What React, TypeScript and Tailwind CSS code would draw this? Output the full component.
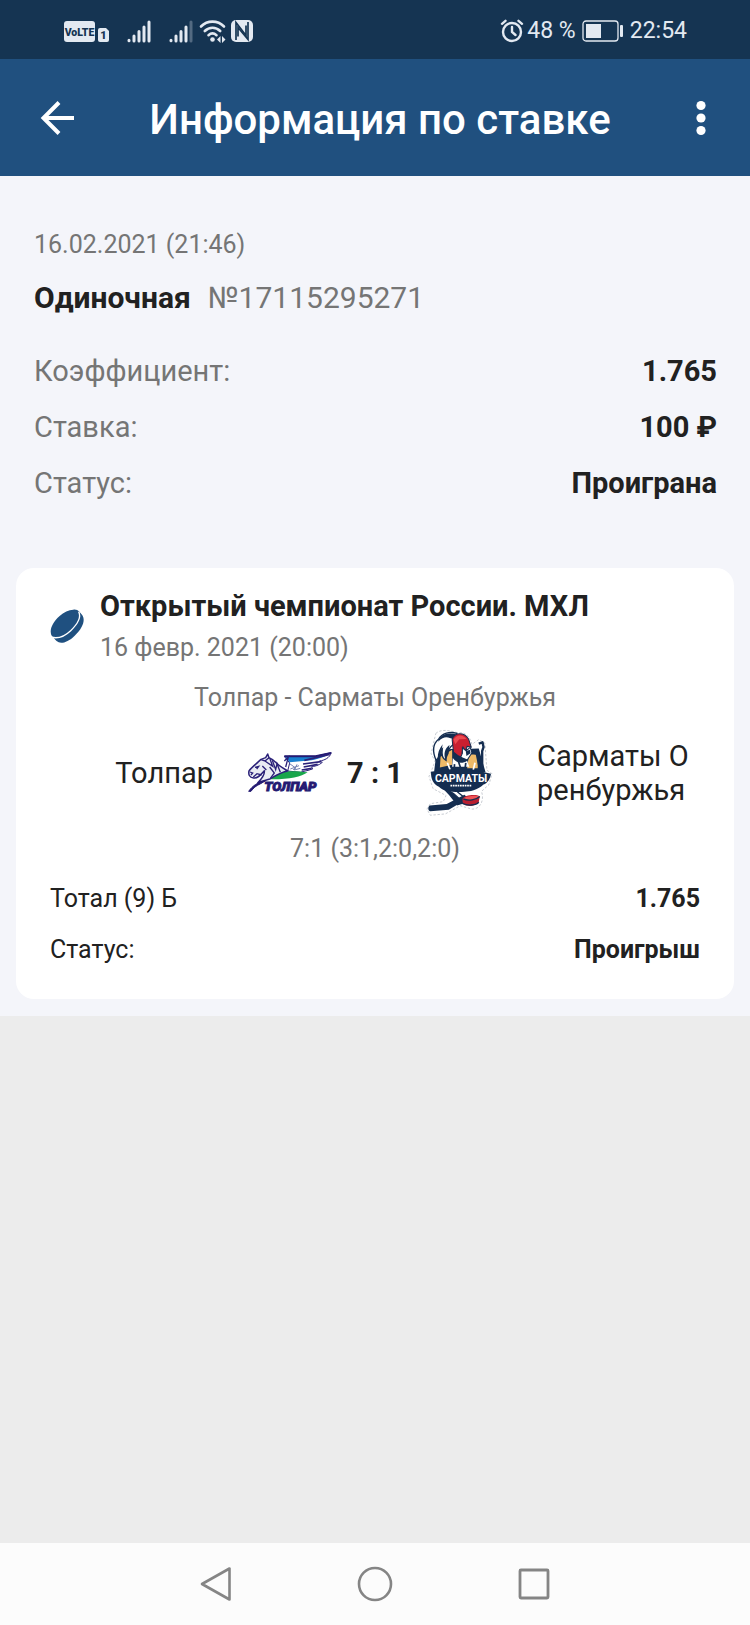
import type { ReactNode } from "react";

function SignalIcon({ weak = false }: { weak?: boolean }) {
  return (
    <svg className="h-6 w-6" viewBox="0 0 24 24" fill="none" stroke="#e3e9f1" strokeWidth="3" strokeLinecap="round" aria-hidden="true">
      <path d="M2 21.2v.6M7 17v5M12 12.5V22M17 8v14" />
      <path d="M22 3v19" opacity={weak ? 0.3 : 1} />
    </svg>
  );
}

function StatusBar() {
  return (
    <div className="flex h-[59px] shrink-0 items-center justify-between bg-[#153452] pt-0.5 pr-[63px] pl-16 text-[23px] leading-8 text-[#e3e9f1]">
      <div className="flex items-center">
        <svg className="h-6 w-[45px]" viewBox="0 0 45 24" aria-hidden="true">
          <rect x="0" y="2" width="31" height="21" rx="3" fill="#e3e9f1" />
          <text x="15.5" y="16.500" textAnchor="middle" fontFamily="Roboto, sans-serif" fontSize="10.500" fontWeight="900" fill="#153452">VoLTE</text>
          <path d="M36 9h6l3 3v9a2 2 0 0 1-2 2h-7a2 2 0 0 1-2-2V11a2 2 0 0 1 2-2z" fill="#e3e9f1" />
          <text x="39.5" y="20" textAnchor="middle" fontFamily="Roboto, sans-serif" fontSize="11" fontWeight="900" fill="#153452">1</text>
        </svg>
        <div className="ml-[18px] flex gap-[18px]">
          <SignalIcon />
          <SignalIcon weak />
        </div>
        <svg className="ml-1.5 h-6 w-[27px]" viewBox="0 0 27 24" fill="none" stroke="#e3e9f1" strokeWidth="2.6" strokeLinecap="round" aria-hidden="true">
          <path d="M2 7.5C8.500 1 18.500 1 25 7.500M5.800 12c4.500-4.400 11-4.400 15.400 0M9.500 16.200c2.500-2.200 5.500-2.200 8 0" />
          <circle cx="13.500" cy="20.500" r="2.300" fill="#e3e9f1" stroke="none" />
          <path d="M21.500 17v7l-3.500-3.500zM23 17v7l3.500-3.500z" fill="#e3e9f1" stroke="none" />
        </svg>
        <svg className="ml-1 h-6 w-6" viewBox="0 0 24 24" aria-hidden="true">
          <rect x="1" y="1" width="22" height="22" rx="5" fill="#e3e9f1" />
          <path d="M6 21V3.500L16 16.500V6.500" fill="none" stroke="#153452" strokeWidth="1.700" />
          <path d="M8 17.500V8.500L18 20.500V3" fill="none" stroke="#153452" strokeWidth="1.700" />
        </svg>
      </div>
      <div className="flex items-center">
        <svg className="h-6 w-6" viewBox="0 0 24 24" fill="none" stroke="#e3e9f1" strokeWidth="2.400" strokeLinecap="round" aria-hidden="true">
          <circle cx="12" cy="13" r="9" />
          <path d="M12 8v5l3.500 3M2 4.800l3.500-3M22 4.800l-3.500-3" />
        </svg>
        <span className="ml-[3px]">48 %</span>
        <svg className="mx-1.5 h-6 w-[42px]" viewBox="0 0 42 24" aria-hidden="true">
          <rect x="1" y="2" width="35" height="20" rx="3" fill="none" stroke="#e3e9f1" strokeWidth="1.300" />
          <rect x="4" y="5" width="15" height="14" fill="#e3e9f1" />
          <rect x="38" y="6" width="3" height="12" rx="1" fill="#e3e9f1" />
        </svg>
        <span>22:54</span>
      </div>
    </div>
  );
}

function Header() {
  return (
    <header className="flex h-[117px] shrink-0 items-center justify-between bg-[#20507f] pr-8 pl-[34px] text-white">
      <button type="button" aria-label="Назад" className="flex h-12 w-12 items-center justify-center">
        <svg className="h-9 w-9" viewBox="0 0 36 36" fill="none" stroke="currentColor" strokeWidth="4" aria-hidden="true">
          <path d="M34 18H4M19 2.500L3.500 18L19 33.500" />
        </svg>
      </button>
      <h1 className="pt-1 pr-1.5 text-[42px] leading-[50px] font-medium whitespace-nowrap">Информация по ставке</h1>
      <button type="button" aria-label="Меню" className="flex h-12 w-[34px] items-center justify-center">
        <svg className="h-9 w-3" viewBox="0 0 12 36" fill="currentColor" aria-hidden="true">
          <circle cx="6" cy="5.500" r="4.600" />
          <circle cx="6" cy="18" r="4.600" />
          <circle cx="6" cy="30.500" r="4.600" />
        </svg>
      </button>
    </header>
  );
}

function SummaryRow({ label, children }: { label: string; children: ReactNode }) {
  return (
    <div className="flex justify-between text-[29px] leading-[56px]">
      <dt className="text-[#757575]">{label}</dt>
      <dd className="font-bold">{children}</dd>
    </div>
  );
}

function BetRow({ label, children }: { label: string; children: ReactNode }) {
  return (
    <div className="flex justify-between text-[25px] leading-[51px]">
      <dt>{label}</dt>
      <dd className="font-bold">{children}</dd>
    </div>
  );
}

function PuckIcon() {
  return (
    <svg className="h-[34px] w-[34px] shrink-0" viewBox="0 0 102 102" aria-hidden="true">
      <path d="M70 2C85 0 90 12 98 20C106 34 98 58 74 80C56 98 38 104 26 100C16 96 14 88 6 82C-4 66 6 42 28 22C42 9 56 3 70 2Z" fill="#1f5080" />
      <path d="M86 8C94 24 82 46 62 65C44 82 22 90 3 84" fill="none" stroke="#fff" strokeWidth="4" />
    </svg>
  );
}

function TolparLogo() {
  return (
    <svg className="h-11 w-[86px] shrink-0" viewBox="50 92 258 132" role="img" aria-label="Толпар">
      <path d="M162 108H255L303 97C298 113 282 120 268 122L276 126C266 136 250 138 243 140L248 145C232 152 220 152 210 156L172 152L178 128Z" fill="#fff" stroke="#2b2179" strokeWidth="3" />
      <path d="M164 109H258L297 99C286 111 266 115 244 120L178 126Z" fill="#1780cf" />
      <path d="M162 108H256L302 98" fill="none" stroke="#241a72" strokeWidth="6" />
      <path d="M222 120L298 102M218 131L272 124M220 140L262 132M214 149L244 144" stroke="#2b2179" strokeWidth="5" />
      <path d="M178 130L196 143L188 148M200 132L192 149L210 144M180 146L206 136" fill="none" stroke="#7482b2" strokeWidth="3" />
      <path d="M118 177C144 154 170 148 232 156C212 170 174 178 118 177Z" fill="#19a64b" />
      <path d="M56 152C64 140 82 128 92 117L106 112L112 101L116 112C134 118 140 134 156 142L172 152C150 156 136 166 116 177C104 181 92 181 82 188C96 174 104 164 102 151C91 163 84 174 70 173C56 171 54 162 56 152Z" fill="#e9ebf3" stroke="#2b2179" strokeWidth="4.500" strokeLinejoin="round" />
      <path d="M92 118L104 122L116 112M104 122L127 138L119 116M126 120L136 148L140 130L150 156M118 140L132 158L120 174M74 141L85 138L79 146M59 155L67 158L62 164M69 170L80 160L94 164M96 137L108 149M162 122L174 110L166 140" fill="none" stroke="#2b2179" strokeWidth="4" />
      <path d="M55 213C66 197 82 185 106 181L91 190C77 196 68 204 62 213Z" fill="#241a72" stroke="#241a72" strokeWidth="3" />
      <text x="102" y="213" fontFamily="Roboto, sans-serif" fontSize="40" fontWeight="900" fontStyle="italic" fill="#241a72" stroke="#241a72" strokeWidth="3">ТОЛПАР</text>
    </svg>
  );
}

function SarmatyLogo() {
  return (
    <svg className="h-[90px] w-[68px] shrink-0" viewBox="54 24 198 264" role="img" aria-label="Сарматы">
      <path d="M82 40C96 27 120 30 146 38C166 34 183 48 188 72L208 58L226 68L232 148L247 158L238 190L216 210C224 232 216 262 188 262L154 252L110 276L66 280L56 262L66 246L104 240L112 222L74 202L62 166L70 148L80 120L68 100Z" fill="#fff" stroke="#aeb4bc" strokeWidth="2" strokeDasharray="7 5" />
      <path d="M77 152L82 112C96 88 120 84 144 86L208 84L228 154Z" fill="#142d50" />
      <path d="M96 108L130 88V132L94 140ZM180 96L205 104V142H174Z" fill="#efba68" />
      <path d="M208 70L219 66L222 80L218 92V150M186 98H202L211 142" fill="none" stroke="#142d50" strokeWidth="7" strokeLinejoin="round" />
      <path d="M144 40C124 34 100 38 90 57C72 72 73 96 83 119C92 113 92 96 101 86C98 108 104 116 112 119C108 94 124 78 142 65Z" fill="#fff" stroke="#142d50" strokeWidth="4" />
      <path d="M143 43C116 35 92 45 89 64C108 44 120 52 133 57ZM102 72C92 86 87 98 88 112L98 96ZM122 74C108 84 104 102 111 118L120 98Z" fill="#142d50" />
      <path d="M130 58C137 35 165 36 178 56L186 80L174 78L169 91L162 80L159 98C170 102 162 113 147 105L134 95Z" fill="#c91f31" stroke="#142d50" strokeWidth="3" />
      <path d="M134 58C144 42 162 42 172 56L151 57L139 72Z" fill="#ec4a50" />
      <path d="M160 82L171 91L183 81L188 97L180 109L174 118L155 110L160 98Z" fill="#fff" stroke="#142d50" strokeWidth="3" />
      <path d="M170 92L182 88L184 98L172 106Z" fill="#142d50" />
      <path d="M132 112C142 128 160 130 174 120L180 138H130Z" fill="#fff" />
      <path d="M148 121L155 142M137 130L136 145M170 126L168 142" stroke="#142d50" strokeWidth="5" />
      <path d="M116 126L124 146M197 126L192 146" stroke="#fff" strokeWidth="5" />
      <path d="M68 152Q154 136 244 158C242 172 234 186 222 190C204 207 181 211 166 211C136 213 103 210 91 196C76 189 67 175 68 152Z" fill="#142d50" />
      <text x="156" y="183" textAnchor="middle" fontFamily="Roboto, sans-serif" fontSize="31" fontWeight="700" fill="#fff">САРМАТЫ</text>
      <path d="M125 193H187" stroke="#fff" strokeWidth="5" strokeDasharray="5 2" />
      <path d="M109 205C132 209 145 226 163 244L145 249C132 232 126 221 109 205ZM134 203C151 214 158 224 173 233" fill="#142d50" stroke="#142d50" strokeWidth="4" />
      <path d="M64 251L114 247L166 220L177 230L120 264L66 268C58 266 59 254 64 251Z" fill="#142d50" />
      <path d="M160 232C165 220 200 217 211 224L208 242C198 254 174 256 162 247Z" fill="#b91e30" />
      <path d="M162 231C174 223 198 221 211 225C203 235 177 238 162 231Z" fill="#ef5356" />
      <path d="M163 232C177 239 201 235 211 225M160 245C176 253 200 251 208 242" fill="none" stroke="#142d50" strokeWidth="4" />
    </svg>
  );
}

function MatchCard() {
  return (
    <article className="mx-4 rounded-[18px] bg-white pt-5 pb-6">
      <div className="flex items-center gap-4 px-[34px]">
        <PuckIcon />
        <div>
          <h2 className="text-[29px] leading-9 font-bold">Открытый чемпионат России. МХЛ</h2>
          <p className="mt-2 text-[25px] leading-8 text-[#757575]">16 февр. 2021 (20:00)</p>
        </div>
      </div>
      <p className="mt-[18px] text-center text-[25px] leading-8 text-[#757575]">Толпар - Сарматы Оренбуржья</p>
      <div className="mt-[11px] flex h-24 items-center px-[39px] text-[29px] leading-[34px]">
        <div className="flex-1 pr-[34px] text-right break-all">Толпар</div>
        <TolparLogo />
        <div className="w-[84px] text-center font-bold whitespace-nowrap">7 : 1</div>
        <div className="flex w-[86px] justify-center">
          <SarmatyLogo />
        </div>
        <div className="flex-1 pl-[34px] break-all">Сарматы Оренбуржья</div>
      </div>
      <p className="mt-3 text-center text-[25px] leading-8 text-[#757575]">7:1 (3:1,2:0,2:0)</p>
      <dl className="mt-2 px-[34px]">
        <BetRow label="Тотал (9) Б">1.765</BetRow>
        <BetRow label="Статус:">Проигрыш</BetRow>
      </dl>
    </article>
  );
}

function NavBar() {
  return (
    <nav className="flex h-[82px] shrink-0 items-center justify-center gap-[119px] bg-[#fcfcfc] text-[#858585]">
      <button type="button" aria-label="Назад" className="flex h-10 w-10 items-center justify-center">
        <svg className="h-9 w-9" viewBox="0 0 36 36" fill="none" stroke="currentColor" strokeWidth="2.600" strokeLinejoin="round" aria-hidden="true">
          <path d="M31.500 2.500V33.500L4 18Z" />
        </svg>
      </button>
      <button type="button" aria-label="Домой" className="flex h-10 w-10 items-center justify-center">
        <svg className="h-9 w-9" viewBox="0 0 36 36" fill="none" stroke="currentColor" strokeWidth="2.600" aria-hidden="true">
          <circle cx="18" cy="18" r="16" />
        </svg>
      </button>
      <button type="button" aria-label="Недавние" className="flex h-10 w-10 items-center justify-center">
        <svg className="h-9 w-9" viewBox="0 0 36 36" fill="none" stroke="currentColor" strokeWidth="2.800" aria-hidden="true">
          <rect x="4" y="4" width="28" height="28" rx="1" />
        </svg>
      </button>
    </nav>
  );
}

export default function App() {
  return (
    <div className="flex min-h-screen flex-col bg-[#ececec] font-['Roboto','Noto_Sans',sans-serif] text-[#212121]">
      <StatusBar />
      <Header />
      <main className="flex-1">
        <div className="bg-[#f4f5fa] pt-[53px] pb-[17px]">
          <section className="pr-[33px] pl-[34px]">
            <p className="text-[25px] leading-8 text-[#757575]">16.02.2021 (21:46)</p>
            <p className="mt-[17px] flex gap-[17px] text-[30px] leading-10">
              <strong className="font-bold">Одиночная</strong>
              <span className="text-[#757575]">№17115295271</span>
            </p>
            <dl className="mt-[25px] mb-[57px]">
              <SummaryRow label="Коэффициент:">1.765</SummaryRow>
              <SummaryRow label="Ставка:">100 ₽</SummaryRow>
              <SummaryRow label="Статус:">Проиграна</SummaryRow>
            </dl>
          </section>
          <MatchCard />
        </div>
      </main>
      <NavBar />
    </div>
  );
}
